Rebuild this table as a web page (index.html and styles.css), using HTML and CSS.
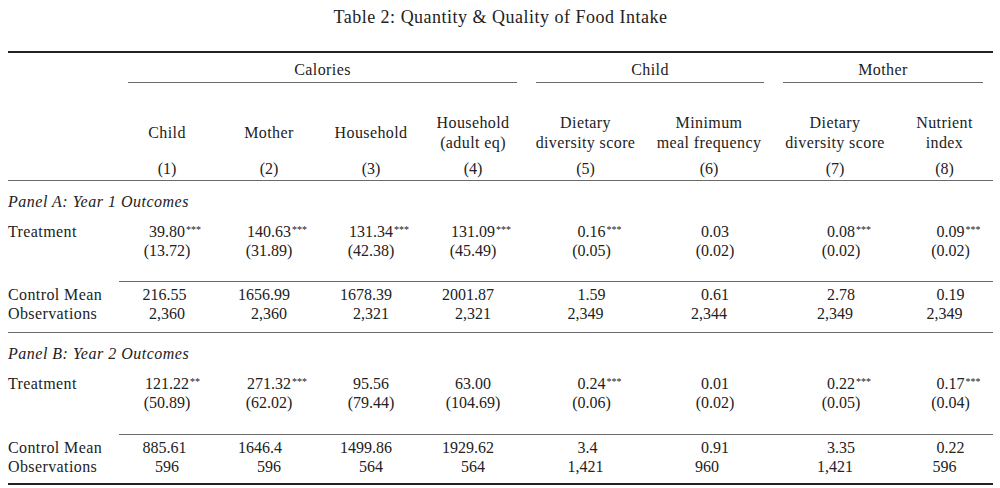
FILE: index.html
```html
<!DOCTYPE html>
<html lang="en">
<head>
<meta charset="utf-8">
<title>Table 2: Quantity &amp; Quality of Food Intake</title>
<link rel="stylesheet" href="styles.css">
</head>
<body>
<div class="page">
  <div class="caption">Table 2: Quantity &amp; Quality of Food Intake</div>
  <div class="table">
    <div class="row groups">
      <div class="group g-cal">Calories</div>
      <div class="group g-child">Child</div>
      <div class="group g-mother">Mother</div>
    </div>
    <div class="row labels">
      <div class="label"></div>
      <div class="label"><span>Child</span></div>
      <div class="label"><span>Mother</span></div>
      <div class="label"><span>Household</span></div>
      <div class="label"><span>Household</span><span>(adult eq)</span></div>
      <div class="label"><span>Dietary</span><span>diversity score</span></div>
      <div class="label"><span>Minimum</span><span>meal frequency</span></div>
      <div class="label"><span>Dietary</span><span>diversity score</span></div>
      <div class="label"><span>Nutrient</span><span>index</span></div>
    </div>
    <div class="row colnums">
      <div></div>
      <div>(1)</div><div>(2)</div><div>(3)</div><div>(4)</div>
      <div>(5)</div><div>(6)</div><div>(7)</div><div>(8)</div>
    </div>

    <section class="panel">
      <div class="panel-title">Panel A: Year 1 Outcomes</div>
      <div class="row line est">
        <div class="stub">Treatment</div>
        <div class="num">39.80<span class="stars">***</span></div>
        <div class="num">140.63<span class="stars">***</span></div>
        <div class="num">131.34<span class="stars">***</span></div>
        <div class="num">131.09<span class="stars">***</span></div>
        <div class="num sh">0.16<span class="stars">***</span></div>
        <div class="num sh">0.03</div>
        <div class="num sh">0.08<span class="stars">***</span></div>
        <div class="num sh">0.09<span class="stars">***</span></div>
      </div>
      <div class="row line se">
        <div class="stub"></div>
        <div class="num">(13.72)</div>
        <div class="num">(31.89)</div>
        <div class="num">(42.38)</div>
        <div class="num">(45.49)</div>
        <div class="num sh">(0.05)</div>
        <div class="num sh">(0.02)</div>
        <div class="num sh">(0.02)</div>
        <div class="num sh">(0.02)</div>
      </div>
      <div class="row line cm">
        <div class="stub">Control Mean</div>
        <div class="num lf1">216.55</div>
        <div class="num lf">1656.99</div>
        <div class="num lf">1678.39</div>
        <div class="num lf">2001.87</div>
        <div class="num sh">1.59</div>
        <div class="num sh">0.61</div>
        <div class="num sh">2.78</div>
        <div class="num sh">0.19</div>
      </div>
      <div class="row line">
        <div class="stub">Observations</div>
        <div class="num">2,360</div>
        <div class="num">2,360</div>
        <div class="num">2,321</div>
        <div class="num">2,321</div>
        <div class="num">2,349</div>
        <div class="num">2,344</div>
        <div class="num">2,349</div>
        <div class="num">2,349</div>
      </div>
    </section>

    <section class="panel">
      <div class="panel-title">Panel B: Year 2 Outcomes</div>
      <div class="row line est">
        <div class="stub">Treatment</div>
        <div class="num">121.22<span class="stars">**</span></div>
        <div class="num">271.32<span class="stars">***</span></div>
        <div class="num">95.56</div>
        <div class="num">63.00</div>
        <div class="num sh">0.24<span class="stars">***</span></div>
        <div class="num sh">0.01</div>
        <div class="num sh">0.22<span class="stars">***</span></div>
        <div class="num sh">0.17<span class="stars">***</span></div>
      </div>
      <div class="row line se">
        <div class="stub"></div>
        <div class="num">(50.89)</div>
        <div class="num">(62.02)</div>
        <div class="num">(79.44)</div>
        <div class="num">(104.69)</div>
        <div class="num sh">(0.06)</div>
        <div class="num sh">(0.02)</div>
        <div class="num sh">(0.05)</div>
        <div class="num sh">(0.04)</div>
      </div>
      <div class="row line cm">
        <div class="stub">Control Mean</div>
        <div class="num lf1">885.61</div>
        <div class="num lf ph">1646.4</div>
        <div class="num lf">1499.86</div>
        <div class="num lf">1929.62</div>
        <div class="num sh ph">3.4</div>
        <div class="num sh">0.91</div>
        <div class="num sh">3.35</div>
        <div class="num sh">0.22</div>
      </div>
      <div class="row line">
        <div class="stub">Observations</div>
        <div class="num">596</div>
        <div class="num">596</div>
        <div class="num">564</div>
        <div class="num">564</div>
        <div class="num">1,421</div>
        <div class="num lf-obs">960</div>
        <div class="num">1,421</div>
        <div class="num">596</div>
      </div>
    </section>
  </div>
</div>
</body>
</html>
```
FILE: styles.css
```css
* {
  box-sizing: border-box;
  margin: 0;
  padding: 0;
}

body {
  margin: 0;
  background: #ffffff;
  color: #222222;
  font-family: "Liberation Serif", "Times New Roman", serif;
  font-size: 16px;
}

.page {
  width: 1000px;
  padding: 0 7px 0 8px;
}

.caption {
  height: 51px;
  padding-top: 7px;
  text-align: center;
  font-size: 18px;
  line-height: 20px;
  letter-spacing: 0.5px;
}

.table {
  border-top: 2px solid #222222;
}

.row {
  display: grid;
  grid-template-columns: 111px 96px 108px 96px 108px 117px 130px 122px 97px;
}

/* group headers with cmidrules */
.groups {
  padding-top: 7px;
}

.group {
  margin: 0 10px 0 9px;
  padding-bottom: 3px;
  border-bottom: 1px solid #6a6a6a;
  line-height: 19px;
  text-align: center;
  letter-spacing: 0.4px;
}

.g-cal { grid-column: 2 / 6; }
.g-child { grid-column: 6 / 8; }
.g-mother { grid-column: 8 / 10; }

/* column labels */
.labels {
  padding-top: 30px;
}

.label {
  height: 40px;
  display: flex;
  flex-direction: column;
  justify-content: center;
  align-items: center;
  line-height: 20px;
  letter-spacing: 0.4px;
  text-align: center;
  white-space: nowrap;
}

.colnums {
  padding: 6px 0 1px;
  line-height: 20px;
  text-align: center;
  border-bottom: 1px solid #6a6a6a;
}

/* panels */
.panel {
  padding-bottom: 9px;
  border-bottom: 1px solid #6a6a6a;
}

.panel:last-child {
  padding-bottom: 7px;
  border-bottom: 2px solid #222222;
}

.panel-title {
  padding-top: 11px;
  line-height: 19px;
  font-style: italic;
  letter-spacing: 0.5px;
}

.line {
  line-height: 19px;
}

.est {
  margin-top: 11px;
}

.stub {
  letter-spacing: 0.4px;
  white-space: nowrap;
}

.num {
  text-align: center;
  white-space: nowrap;
}

.se .num {
  padding-bottom: 21px;
  border-bottom: 1px solid #6a6a6a;
}

.panel + .panel .se .num {
  padding-bottom: 22px;
}

.cm {
  padding-top: 3px;
}

/* significance stars hang to the right of the number */
.stars {
  display: inline-block;
  width: 0;
  text-indent: 1px;
  font-size: 10px;
  line-height: 1;
  vertical-align: 4px;
  white-space: nowrap;
}

/* alignment nudges */
.sh { padding-left: 12px; }
.lf { padding-right: 10px; }
.lf1 { padding-right: 5px; }
.ph { padding-right: 8px; }
.lf.ph { padding-right: 18px; }
.lf-obs { padding-right: 4px; }
```
